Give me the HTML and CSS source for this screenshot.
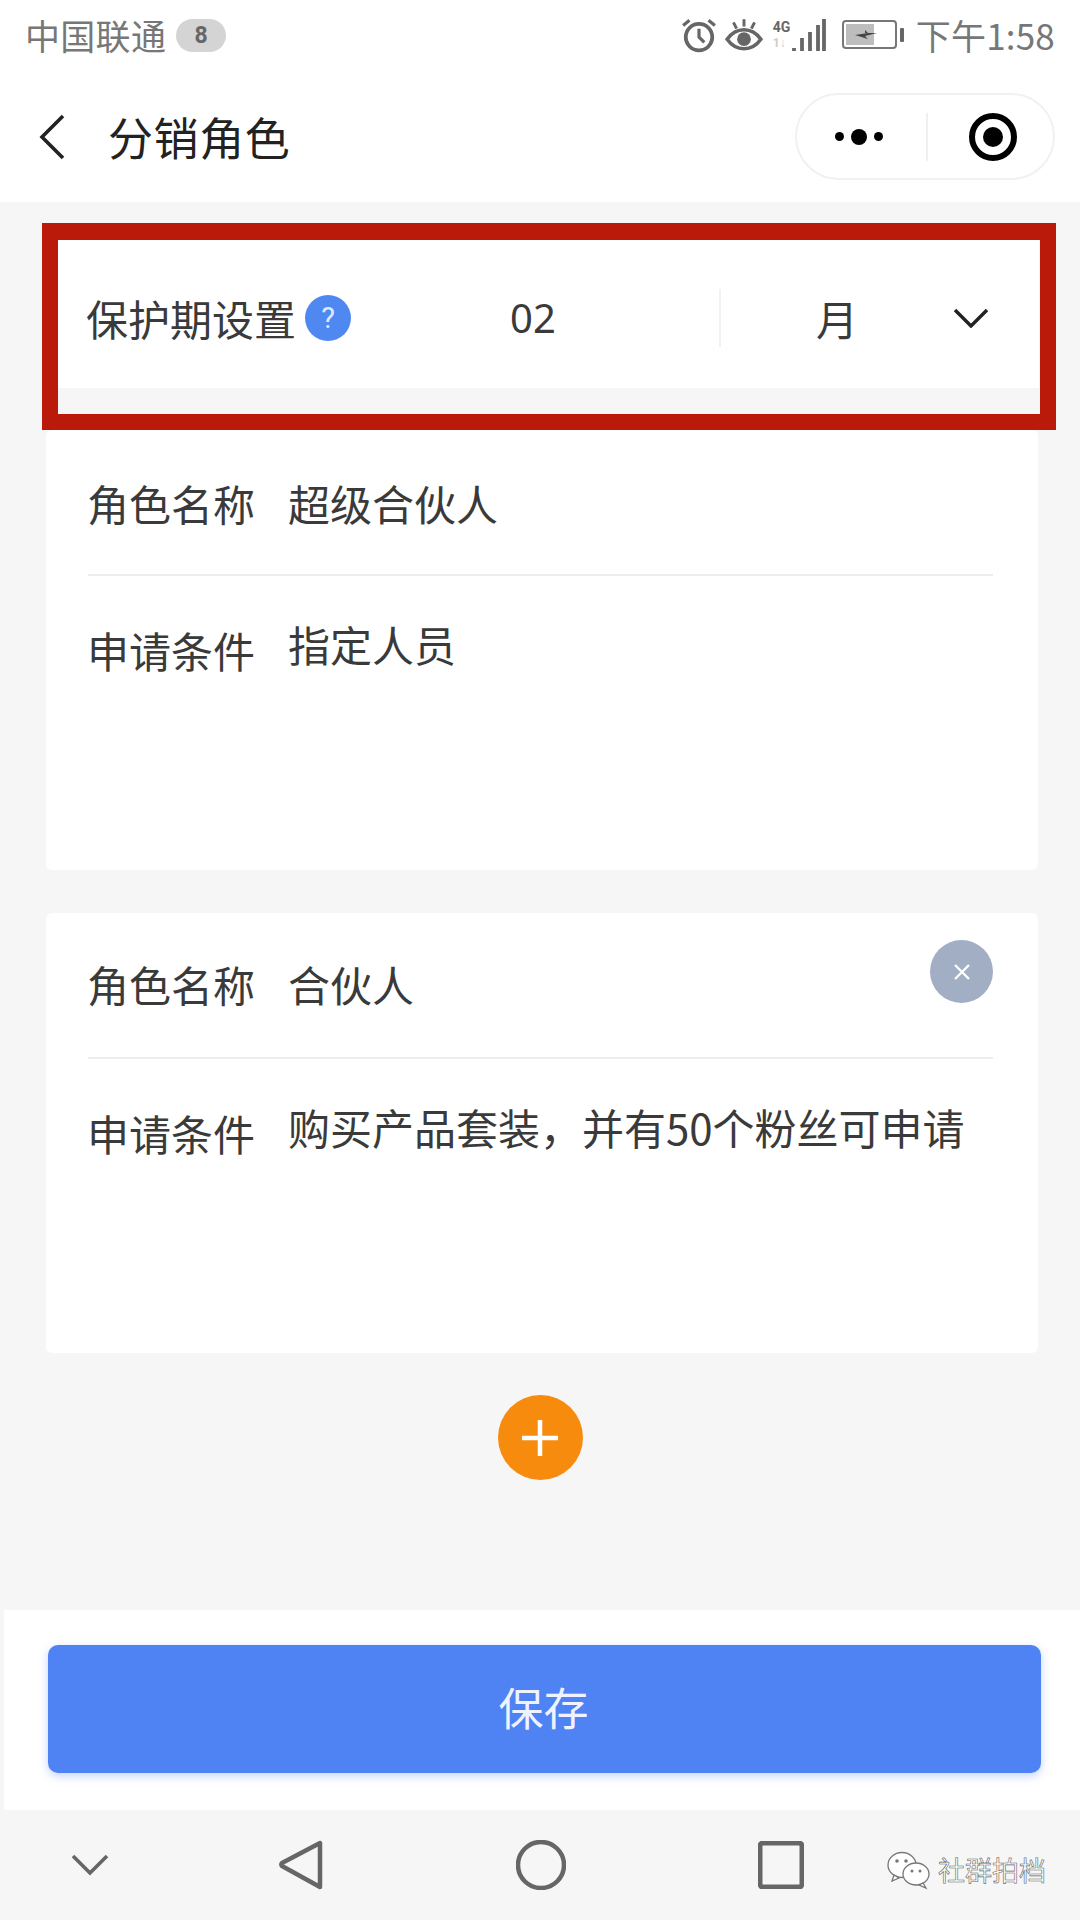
FILE: index.html
```html
<!DOCTYPE html>
<html lang="zh-CN">
<head>
<meta charset="utf-8">
<title>分销角色</title>
<link rel="stylesheet" href="styles.css">
</head>
<body>
<div class="page">
  <header class="top">
    <div class="status">
      <div class="status-left">
        <span class="carrier">中国联通</span>
        <span class="badge">8</span>
      </div>
      <div class="status-right">
        <svg class="ic-alarm" viewBox="0 0 34 34" width="36" height="36"><circle cx="17" cy="19" r="12.5" fill="none" stroke="#666" stroke-width="3.6"/><path d="M17 11v8l5 5" fill="none" stroke="#666" stroke-width="3"/><path d="M2 8l6-5M32 8l-6-5" fill="none" stroke="#666" stroke-width="3"/></svg>
        <svg class="ic-eye" viewBox="0 0 36 34" width="38" height="36"><path d="M2 21c5-7 10-9 16-9s11 2 16 9c-5 7-10 9-16 9S7 28 2 21z" fill="none" stroke="#666" stroke-width="3.4"/><circle cx="18" cy="21" r="6.500" fill="#666"/><path d="M18 2v7M8 5l3 6M28 5l-3 6" stroke="#666" stroke-width="2.800"/></svg>
        <span class="net">
          <span class="net-labels"><span class="net-4g">4G</span><span class="net-1">1↓</span></span>
          <svg viewBox="0 0 34 34" width="36" height="34"><path d="M2 30v3M10 20v13M18 14v19M26 7v26M32 1v32" stroke="#666" stroke-width="3.800" fill="none"/></svg>
        </span>
        <svg class="ic-batt" viewBox="0 0 62 30" width="62" height="30"><rect x="1" y="1" width="53" height="27" rx="3" fill="#fff" stroke="#777" stroke-width="2"/><rect x="4" y="4" width="28" height="21" fill="#bdbdbd"/><path d="M13 15l13-2-3-3 0 3 12 0-12 3 3 3z" fill="#444"/><rect x="58" y="8" width="4" height="14" rx="1" fill="#666"/></svg>
        <span class="time">下午1:58</span>
      </div>
    </div>
    <nav class="navbar">
      <div class="nav-left">
        <svg class="back" viewBox="0 0 28 46" width="28" height="46"><path d="M25 2L4 23l21 21" fill="none" stroke="#222" stroke-width="3.6"/></svg>
        <h1 class="title">分销角色</h1>
      </div>
      <div class="capsule">
        <div class="cap-dots"><i class="dot"></i><i class="dot dot-big"></i><i class="dot"></i></div>
        <div class="cap-sep"></div>
        <div class="cap-target"><i class="target-core"></i></div>
      </div>
    </nav>
  </header>

  <main class="main">
    <section class="period">
      <div class="period-label">
        <span class="period-text">保护期设置</span>
        <span class="help">?</span>
      </div>
      <div class="period-num">02</div>
      <div class="period-sep"></div>
      <div class="period-unit">月</div>
      <svg class="period-chev" viewBox="0 0 36 20" width="36" height="20"><path d="M2 2l16 16L34 2" fill="none" stroke="#222" stroke-width="3.4"/></svg>
    </section>

    <section class="card card-first">
      <div class="row row-name"><span class="label">角色名称</span><span class="value">超级合伙人</span></div>
      <div class="row row-cond"><span class="label">申请条件</span><span class="value">指定人员</span></div>
    </section>

    <section class="card card-removable">
      <div class="close"><svg viewBox="0 0 18 18" width="18" height="18"><path d="M2 2l14 14M16 2L2 16" stroke="#fff" stroke-width="2.400"/></svg></div>
      <div class="row row-name"><span class="label">角色名称</span><span class="value">合伙人</span></div>
      <div class="row row-cond"><span class="label">申请条件</span><span class="value">购买产品套装，并有50个粉丝可申请</span></div>
    </section>

    <div class="add"><svg viewBox="0 0 38 38" width="38" height="38"><path d="M19 1v36M1 19h36" stroke="#fff" stroke-width="4.500"/></svg></div>
  </main>

  <div class="footer">
    <button class="save">保存</button>
  </div>

  <div class="sysnav">
    <svg class="sys-chev" viewBox="0 0 38 22" width="38" height="22"><path d="M2 2l17 17L36 2" fill="none" stroke="#666" stroke-width="3.600"/></svg>
    <svg class="sys-back" viewBox="0 0 44 50" width="44" height="50"><path d="M41 3v44L3 26a2 2 0 010-3z" fill="none" stroke="#666" stroke-width="4.500" stroke-linejoin="round"/></svg>
    <svg class="sys-home" viewBox="0 0 50 50" width="50" height="50"><circle cx="25" cy="25" r="23" fill="none" stroke="#666" stroke-width="4.500"/></svg>
    <svg class="sys-recent" viewBox="0 0 46 48" width="46" height="48"><rect x="2" y="2" width="42" height="44" rx="3" fill="none" stroke="#666" stroke-width="5"/></svg>
  </div>

  <div class="watermark">
    <svg viewBox="0 0 46 40" width="46" height="40"><ellipse cx="16" cy="15" rx="14" ry="12.500" fill="#fff" stroke="#777" stroke-width="1.300"/><path d="M8 25l-2 6 7-3z" fill="#fff" stroke="#777" stroke-width="1.300"/><ellipse cx="30" cy="24" rx="13" ry="11" fill="#fff" stroke="#777" stroke-width="1.300"/><path d="M37 33l3 5-7-3z" fill="#fff" stroke="#777" stroke-width="1.300"/><circle cx="11" cy="11" r="1.800" fill="#777"/><circle cx="20" cy="11" r="1.800" fill="#777"/><circle cx="26" cy="21" r="1.500" fill="#777"/><circle cx="34" cy="21" r="1.500" fill="#777"/></svg>
    <span class="wm-text">社群拍档</span>
  </div>

  <div class="red-frame"></div>
</div>
</body>
</html>
```

FILE: styles.css
```css
* { box-sizing: border-box; }
html, body { margin: 0; padding: 0; }
body {
  width: 1080px;
  height: 1920px;
  overflow: hidden;
  font-family: "Noto Sans CJK SC", "Noto Sans", sans-serif;
  background: #f6f6f6;
}
.page {
  position: relative;
  width: 1080px;
  height: 1920px;
  display: flex;
  flex-direction: column;
}
.top { height: 202px; background: #fff; flex: none; }
.status {
  height: 72px;
  padding: 0 25px 2px 25px;
  display: flex;
  justify-content: space-between;
  align-items: center;
}
.status-left { display: flex; align-items: center; gap: 10px; }
.carrier { font-size: 35px; line-height: 40px; color: #777; letter-spacing: .3px; }
.badge {
  width: 50px;
  height: 33px;
  border-radius: 17px;
  background: #d4d4d4;
  color: #666;
  font: 700 23px/33px "Roboto", sans-serif;
  text-align: center;
}
.status-right { display: flex; align-items: center; }
.ic-alarm { margin-right: 8px; }
.ic-eye { margin-right: 10px; }
.net { display: flex; align-items: center; margin-right: 15px; }
.net-labels { display: flex; flex-direction: column; width: 18px; font-family: "Roboto", sans-serif; font-weight: 700; }
.net-4g { font-size: 14px; line-height: 16px; color: #666; }
.net-1 { font-size: 12px; line-height: 16px; color: #ccc; }
.ic-batt { margin-right: 12px; }
.time { font: 35px/40px "Noto Sans CJK SC", sans-serif; color: #777; letter-spacing: .2px; }

.navbar {
  height: 130px;
  padding: 0 25px 1px 38px;
  display: flex;
  justify-content: space-between;
  align-items: center;
}
.nav-left { display: flex; align-items: center; gap: 42px; }
.title { margin: 0; font-size: 45px; font-weight: 400; line-height: 56px; color: #222; letter-spacing: .6px; }
.capsule {
  width: 260px;
  height: 87px;
  border: 2px solid #f1f1f1;
  border-radius: 44px;
  display: flex;
  align-items: center;
}
.cap-dots { width: 129px; padding-right: 5px; display: flex; justify-content: center; align-items: center; gap: 7px; }
.dot { width: 9px; height: 9px; border-radius: 50%; background: #000; }
.dot-big { width: 16px; height: 16px; }
.cap-sep { width: 2px; height: 48px; background: #f0f0f0; }
.cap-target {
  width: 48px;
  height: 48px;
  margin-left: 41px;
  border: 6px solid #000;
  border-radius: 50%;
  display: flex;
  align-items: center;
  justify-content: center;
}
.target-core { width: 20px; height: 20px; border-radius: 50%; background: #000; }

.main {
  flex: 1;
  padding: 38px 42px 0 46px;
  display: flex;
  flex-direction: column;
  gap: 42px;
}
.period {
  height: 148px;
  flex: none;
  margin: 0 -1px 0 0;
  background: #fff;
  display: flex;
  align-items: center;
  padding: 8px 0 0 40px;
  color: #3a3a3a;
  font-size: 42px;
}
.period-label { width: 265px; flex: none; display: flex; align-items: center; gap: 9px; line-height: 56px; }
.period-text { white-space: nowrap; }
.help {
  width: 46px;
  height: 46px;
  flex: none;
  border-radius: 50%;
  background: #4f88f0;
  color: #dfe9ff;
  font: 400 29px/46px "Roboto", sans-serif;
  text-align: center;
}
.period-num { width: 144px; flex: none; margin-left: 159px; line-height: 56px; font-family: "Noto Sans", sans-serif; font-size: 40px; }
.period-sep { width: 2px; height: 58px; flex: none; background: #f2f2f2; margin-left: 65px; }
.period-unit { margin-left: 95px; width: 44px; flex: none; line-height: 54px; }
.period-chev { margin-left: 93px; flex: none; }

.card {
  position: relative;
  height: 440px;
  flex: none;
  background: #fff;
  border-radius: 6px;
  padding: 0 45px 0 42px;
}
.card-removable { margin-top: 1px; }
.row { display: flex; color: #3a3a3a; font-size: 42px; line-height: 56px; }
.label { width: 201px; flex: none; margin-left: -1px; }
.value { white-space: nowrap; }
.row-name { height: 146px; padding-top: 43px; border-bottom: 2px solid #ededed; }
.card-first .row-name { padding-top: 45px; }
.row-cond { padding-top: 40px; }
.row-cond .label { padding-top: 6px; }
.close {
  position: absolute;
  top: 27px;
  right: 45px;
  width: 63px;
  height: 63px;
  border-radius: 50%;
  background: #a2aec4;
  display: flex;
  align-items: center;
  justify-content: center;
}
.add {
  width: 85px;
  height: 85px;
  flex: none;
  align-self: center;
  margin-right: 4px;
  border-radius: 50%;
  background: #f78b0e;
  display: flex;
  align-items: center;
  justify-content: center;
}

.footer {
  height: 200px;
  flex: none;
  margin-left: 4px;
  background: #fff;
  padding: 35px 39px 37px 44px;
}
.save {
  display: block;
  width: 100%;
  height: 128px;
  border: 0;
  padding: 0 2px 4px 0;
  border-radius: 10px;
  background: #4f82f3;
  box-shadow: 0 3px 10px rgba(79, 130, 243, .35);
  color: #eef3ff;
  font: 45px/56px "Noto Sans CJK SC", sans-serif;
}

.sysnav {
  position: relative;
  height: 110px;
  flex: none;
  background: #f6f6f6;
  display: flex;
  align-items: center;
  padding-left: 71px;
}
.sys-chev { margin-right: 170px; }
.sys-back { margin-right: 193px; }
.sys-home { margin-right: 192px; }

.watermark {
  position: absolute;
  left: 886px;
  top: 1850px;
  display: flex;
  align-items: center;
  gap: 6px;
}
.wm-text {
  font-size: 27px;
  line-height: 40px;
  color: #fff;
  -webkit-text-stroke: .6px #666;
  white-space: nowrap;
}

.red-frame {
  position: absolute;
  left: 42px;
  top: 223px;
  width: 1014px;
  height: 207px;
  border: 16px solid #b91a0a;
  border-top-width: 17px;
  pointer-events: none;
}
```
